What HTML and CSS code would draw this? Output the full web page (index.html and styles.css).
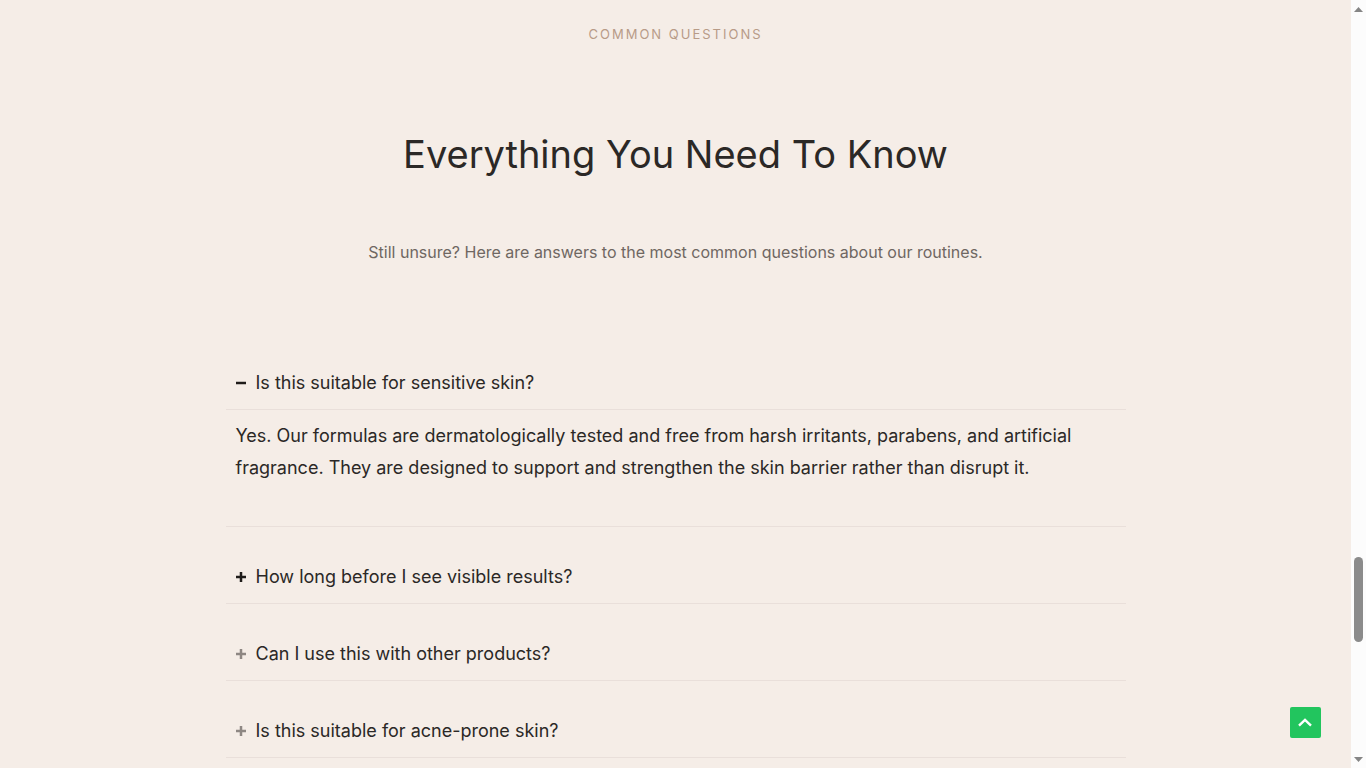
FILE: index.html
```html
<!DOCTYPE html>
<html lang="en">

<head>
    <meta charset="UTF-8">
    <meta name="viewport" content="width=device-width, initial-scale=1.0">
    <title>Common Questions</title>
    <link rel="stylesheet" href="styles.css">
</head>

<body>
    <main class="page">
        <!-- Section header -->
        <header class="faq-header">
            <p class="eyebrow">COMMON QUESTIONS</p>
            <h1 class="title">Everything You Need To Know</h1>
            <p class="intro">Still unsure? Here are answers to the most common questions about our routines.</p>
        </header>

        <!-- Accordion -->
        <section class="faq-list">
            <details class="faq-item" open>
                <summary class="question">
                    <svg class="icon" viewBox="0 0 10 10" aria-hidden="true"><path d="M0 5H10"/></svg>
                    Is this suitable for sensitive skin?
                </summary>
                <p class="answer">Yes. Our formulas are dermatologically tested and free from harsh irritants, parabens, and artificial fragrance. They are designed to support and strengthen the skin barrier rather than disrupt it.</p>
            </details>
            <details class="faq-item">
                <summary class="question">
                    <svg class="icon" viewBox="0 0 10 10" aria-hidden="true"><path d="M0 5H10M5 0V10"/></svg>
                    How long before I see visible results?
                </summary>
            </details>
            <details class="faq-item faq-item-muted">
                <summary class="question">
                    <svg class="icon" viewBox="0 0 10 10" aria-hidden="true"><path d="M0 5H10M5 0V10"/></svg>
                    Can I use this with other products?
                </summary>
            </details>
            <details class="faq-item faq-item-muted">
                <summary class="question">
                    <svg class="icon" viewBox="0 0 10 10" aria-hidden="true"><path d="M0 5H10M5 0V10"/></svg>
                    Is this suitable for acne-prone skin?
                </summary>
            </details>
        </section>
    </main>

    <!-- Scroll rail -->
    <aside class="rail">
        <button class="rail-arrow" type="button" aria-label="Scroll up">
            <svg viewBox="0 0 9 5" aria-hidden="true"><path d="M0 5L4.5 0L9 5Z"/></svg>
        </button>
        <div class="rail-track">
            <div class="rail-thumb"></div>
        </div>
        <button class="rail-arrow" type="button" aria-label="Scroll down">
            <svg viewBox="0 0 9 5" aria-hidden="true"><path d="M0 0H9L4.5 5Z"/></svg>
        </button>
    </aside>

    <!-- Back to top -->
    <button class="to-top" id="to-top" type="button" aria-label="Back to top">
        <svg viewBox="0 0 15 9" aria-hidden="true"><path d="M1 7.6L7 1.8L13 7.6"/></svg>
    </button>
</body>

</html>
```

FILE: styles.css
```css
* {
    box-sizing: border-box;
}

body {
    margin: 0;
    display: flex;
    height: 100vh;
    overflow: hidden;
    background-color: #f5ede7;
    color: #2b2826;
    font-family: Inter, "Liberation Sans", sans-serif;
}

button {
    padding: 0;
    border: none;
    cursor: pointer;
}

.page {
    flex: 1;
    padding: 24px 24px 0;
}

/* Section header */
.faq-header {
    display: flex;
    flex-direction: column;
    align-items: center;
    text-align: center;
}

.eyebrow {
    margin: 0;
    font-size: 13px;
    line-height: 20px;
    letter-spacing: 2px;
    color: #b89b87;
}

.title {
    margin: 84px 0 0;
    font-size: 38px;
    font-weight: 400;
    line-height: 52px;
}

.intro {
    margin: 60px 0 0;
    font-size: 16px;
    line-height: 24px;
    color: #6f6762;
}

/* Accordion */
.faq-list {
    display: flex;
    flex-direction: column;
    gap: 24px;
    max-width: 900px;
    margin: 93px auto 0;
}

.question {
    display: flex;
    align-items: center;
    gap: 10px;
    padding: 13px 10px 14px;
    border-bottom: 1px solid #e9dfda;
    font-size: 18px;
    line-height: 25px;
    cursor: pointer;
    list-style: none;
}

.question::-webkit-details-marker {
    display: none;
}

.icon {
    width: 10px;
    height: 10px;
    fill: none;
    stroke: #1f1c1a;
    stroke-width: 2.5;
}

.faq-item-muted .icon {
    stroke: #8e8783;
}

.answer {
    margin: 0;
    padding: 10px 10px 42px;
    border-bottom: 1px solid #e9dfda;
    font-size: 18px;
    line-height: 32px;
}

/* Scroll rail */
.rail {
    display: flex;
    flex-direction: column;
    width: 15px;
    background-color: #fcfcfc;
}

.rail-arrow {
    display: flex;
    align-items: center;
    justify-content: center;
    height: 18px;
    background: none;
}

.rail-arrow svg {
    width: 9px;
    height: 5px;
    fill: #858585;
}

.rail-track {
    flex: 1;
    display: flex;
    flex-direction: column;
    justify-content: flex-end;
    align-items: center;
    padding-bottom: 108px;
}

.rail-thumb {
    width: 9px;
    height: 85px;
    border-radius: 5px;
    background-color: #8b8b8b;
}

/* Back to top */
.to-top {
    position: fixed;
    right: 45px;
    bottom: 30px;
    display: flex;
    align-items: center;
    justify-content: center;
    width: 31px;
    height: 31px;
    border-radius: 2px;
    background-color: #22c55e;
}

.to-top svg {
    width: 15px;
    height: 9px;
    fill: none;
    stroke: #fff;
    stroke-width: 2.4;
}
```
